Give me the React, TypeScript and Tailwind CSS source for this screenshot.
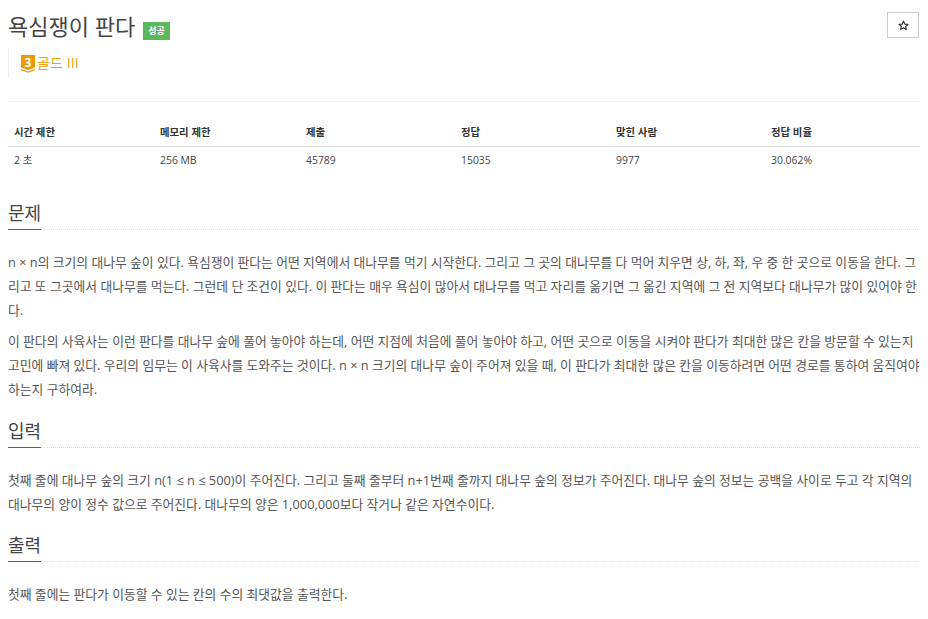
const cols = ['w-[146px]', 'w-[146px]', 'w-[155px]', 'w-[155px]', 'w-[155px]', 'w-[155px]'];
const headers = ['시간 제한', '메모리 제한', '제출', '정답', '맞힌 사람', '정답 비율'];
const values = ['2 초', '256 MB', '45789', '15035', '9977', '30.062%'];

const Section = ({ title, paragraphs }: { title: string; paragraphs: string[] }) => (
  <section className="mb-[14.4px]">
    <div className="h-[32px] border-b border-dotted border-[#dddddd]">
      <h2 className="inline-block h-[32px] border-b border-[#0076c0] text-[18px] leading-[30px] text-[#444444] font-normal">
        {title}
      </h2>
    </div>
    <div className="pt-[20px]">
      {paragraphs.map((p, i) => (
        <p key={i} className="mb-[6px] text-[12.8px] leading-[24.2px] text-[#555555]">
          {p}
        </p>
      ))}
    </div>
  </section>
);

export default function App() {
  return (
    <div className="bg-white min-h-screen px-[8px] font-['Open_Sans','Noto_Sans_CJK_KR',sans-serif] overflow-hidden">
      <div className="h-[102px] border-b border-[#eeeeee]">
        <div className="flex items-start justify-between pt-[12px]">
          <div className="flex items-start gap-[7px]">
            <h1 className="w-[128px] text-[22px] leading-[28px] font-normal text-[#444444] whitespace-nowrap">욕심쟁이 판다</h1>
            <span className="mt-[10px] w-[27px] h-[18px] bg-[#5cb85c] text-white text-[9px] font-bold flex items-center justify-center">
              성공
            </span>
          </div>
          <button className="mr-[1px] w-[32px] h-[26px] bg-white border border-[#cccccc] flex items-center justify-center">
            <svg width="11" height="11" viewBox="0 0 24 24" fill="none" stroke="#333333" strokeWidth="2.6" strokeLinejoin="round">
              <path d="M12 2.5l2.9 6.3 6.9.8-5.1 4.7 1.4 6.8L12 17l-6.1 3.4 1.4-6.8L2.2 9.6l6.9-.8z" />
            </svg>
          </button>
        </div>
        <div className="mt-[8px] h-[30px] border-l border-[#eeeeee] pl-[12px] flex items-center gap-[2px]">
          <svg className="mt-[2px]" width="14" height="18" viewBox="0 0 14 18">
            <path d="M0 0h14v12.5l-7 2.5-7-2.5z" fill="#ec9a00" />
            <path d="M0 14l7 2.6 7-2.6v1.2l-7 2.6-7-2.6z" fill="#ec9a00" />
            <text x="7" y="11.5" textAnchor="middle" fontSize="12" fontWeight="700" fill="#ffffff" fontFamily="Open Sans">3</text>
          </svg>
          <span className="text-[14px] leading-[20px] text-[#ec9a00] opacity-90 tracking-[0.1px]">골드 III</span>
        </div>
      </div>

      <table className="mt-[17px] w-[912px] table-fixed border-collapse">
        <thead>
          <tr className="border-b border-[#dddddd]">
            {headers.map((h, i) => (
              <th key={h} className={`${cols[i]} h-[27px] px-[6px] pt-[2px] text-left align-middle text-[10.4px] font-bold text-[#333333]`}>
                {h}
              </th>
            ))}
          </tr>
        </thead>
        <tbody>
          <tr>
            {values.map((v, i) => (
              <td key={i} className={`${cols[i]} h-[27px] px-[6px] pt-[2px] text-left text-[10.4px] text-[#444444]`}>
                {v}
              </td>
            ))}
          </tr>
        </tbody>
      </table>

      <div className="mt-[25px]">
        <Section
          title="문제"
          paragraphs={[
            'n × n의 크기의 대나무 숲이 있다. 욕심쟁이 판다는 어떤 지역에서 대나무를 먹기 시작한다. 그리고 그 곳의 대나무를 다 먹어 치우면 상, 하, 좌, 우 중 한 곳으로 이동을 한다. 그리고 또 그곳에서 대나무를 먹는다. 그런데 단 조건이 있다. 이 판다는 매우 욕심이 많아서 대나무를 먹고 자리를 옮기면 그 옮긴 지역에 그 전 지역보다 대나무가 많이 있어야 한다.',
            '이 판다의 사육사는 이런 판다를 대나무 숲에 풀어 놓아야 하는데, 어떤 지점에 처음에 풀어 놓아야 하고, 어떤 곳으로 이동을 시켜야 판다가 최대한 많은 칸을 방문할 수 있는지 고민에 빠져 있다. 우리의 임무는 이 사육사를 도와주는 것이다. n × n 크기의 대나무 숲이 주어져 있을 때, 이 판다가 최대한 많은 칸을 이동하려면 어떤 경로를 통하여 움직여야 하는지 구하여라.',
          ]}
        />
        <Section
          title="입력"
          paragraphs={[
            '첫째 줄에 대나무 숲의 크기 n(1 ≤ n ≤ 500)이 주어진다. 그리고 둘째 줄부터 n+1번째 줄까지 대나무 숲의 정보가 주어진다. 대나무 숲의 정보는 공백을 사이로 두고 각 지역의 대나무의 양이 정수 값으로 주어진다. 대나무의 양은 1,000,000보다 작거나 같은 자연수이다.',
          ]}
        />
        <Section title="출력" paragraphs={['첫째 줄에는 판다가 이동할 수 있는 칸의 수의 최댓값을 출력한다.']} />
      </div>
    </div>
  );
}
